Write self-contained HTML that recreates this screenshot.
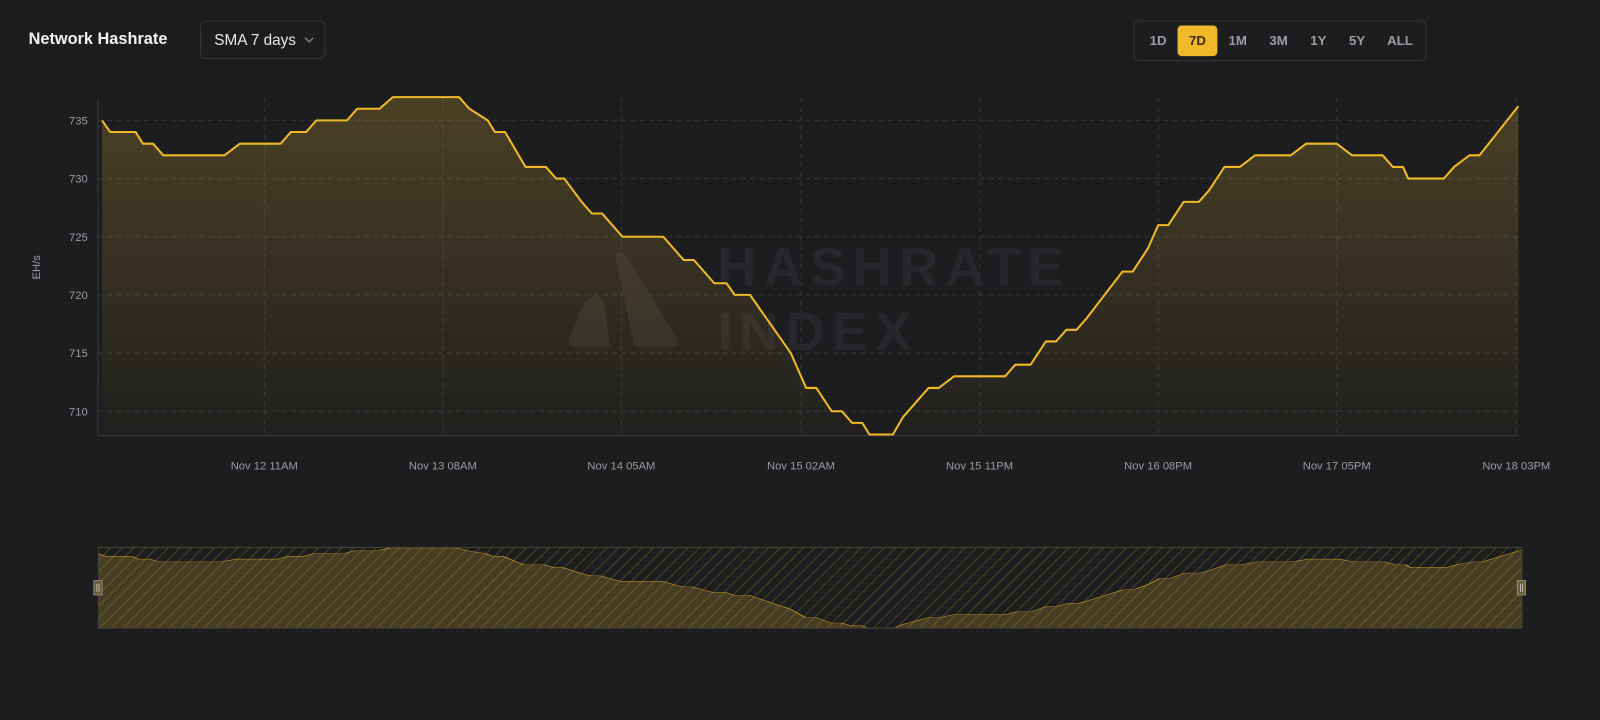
<!DOCTYPE html>
<html><head><meta charset="utf-8"><style>
body{margin:0;width:1600px;height:720px;background:#1c1d1f;font-family:"Liberation Sans",sans-serif;overflow:hidden;position:relative}
#w{position:absolute;left:0;top:0;width:1568px;height:706px;transform:scale(1.0204);transform-origin:0 0}
.t{position:absolute;left:28px;top:30px;color:#f2f2f2;font-weight:bold;font-size:16px}
.sel{position:absolute;left:196px;top:20px;width:123px;height:38px;border:1px solid #35363a;border-radius:6px;box-sizing:border-box;color:#e8e8e8;font-size:15px;line-height:38px;padding-left:13px}
.sel svg{position:absolute;left:101px;top:15px}
.rng{position:absolute;left:1111px;top:20px;width:287px;height:40px;border:1px solid #35363a;border-radius:6px;box-sizing:border-box}
.rng span{position:absolute;top:4px;height:30px;line-height:30px;font-size:13px;color:#9a9ca2;font-weight:bold;text-align:center}
.rng .on{background:#f0b929;color:#3a2e10;border-radius:4px}
</style></head><body><div id="w">
<div class="t">Network Hashrate</div>
<div class="sel">SMA 7 days<svg width="10" height="6" viewBox="0 0 10 6"><path d="M1 1l4 4 4-4" stroke="#888" stroke-width="1.3" fill="none"/></svg></div>
<div class="rng"><span style="left:10px;width:26px">1D</span><span class="on" style="left:42px;width:39px">7D</span><span style="left:86px;width:30px">1M</span><span style="left:126px;width:30px">3M</span><span style="left:166px;width:28px">1Y</span><span style="left:204px;width:28px">5Y</span><span style="left:244px;width:32px">ALL</span></div>
<svg width="1568" height="706" style="position:absolute;left:0;top:0" font-family="Liberation Sans,sans-serif">
<defs>
<linearGradient id="g" x1="0" y1="0" x2="0" y2="1"><stop offset="0" stop-color="#c9a035" stop-opacity=".27"/><stop offset="1" stop-color="#c9a035" stop-opacity=".03"/></linearGradient>
<pattern id="h" width="8" height="8" patternUnits="userSpaceOnUse" patternTransform="rotate(45)"><line x1="0" y1="0" x2="0" y2="8" stroke="#6b5a2a" stroke-width="1.2"/></pattern>
<path id="ln" d="M100,118 L108,129.4 L133,129.4 L140,140.8 L150,140.8 L160,152.2 L220,152.2 L235,140.8 L275,140.8 L285,129.4 L300,129.4 L310,118 L340,118 L350,106.6 L372,106.6 L385,95.2 L450,95.2 L460,106.6 L478,118 L485,129.4 L495,129.4 L515,163.6 L535,163.6 L545,175 L553,175 L570,197.8 L580,209.2 L590,209.2 L600,220.6 L610,232 L650,232 L660,243.4 L670,254.8 L680,254.8 L690,266.2 L700,277.6 L712,277.6 L720,289 L735,289 L775,346 L790,380.2 L800,380.2 L815,403 L825,403 L835,414.4 L845,414.4 L852,425.8 L875,425.8 L885,408.7 L900,391.6 L910,380.2 L920,380.2 L935,368.8 L985,368.8 L995,357.4 L1010,357.4 L1025,334.6 L1035,334.6 L1045,323.2 L1055,323.2 L1065,311.8 L1100,266.2 L1110,266.2 L1125,243.4 L1135,220.6 L1145,220.6 L1160,197.8 L1175,197.8 L1185,186.4 L1200,163.6 L1215,163.6 L1230,152.2 L1265,152.2 L1280,140.8 L1310,140.8 L1325,152.2 L1355,152.2 L1365,163.6 L1375,163.6 L1380,175 L1415,175 L1425,163.6 L1440,152.2 L1450,152.2 L1488,104"/>
</defs>
<g stroke="#34353a" stroke-dasharray="5,4" stroke-width="1">
<line x1="96" x2="1488" y1="118" y2="118"/><line x1="96" x2="1488" y1="175" y2="175"/><line x1="96" x2="1488" y1="232" y2="232"/><line x1="96" x2="1488" y1="289" y2="289"/><line x1="96" x2="1488" y1="346" y2="346"/><line x1="96" x2="1488" y1="403" y2="403"/>
<line x1="259" x2="259" y1="96" y2="427"/><line x1="434" x2="434" y1="96" y2="427"/><line x1="609" x2="609" y1="96" y2="427"/><line x1="785" x2="785" y1="96" y2="427"/><line x1="960" x2="960" y1="96" y2="427"/><line x1="1135" x2="1135" y1="96" y2="427"/><line x1="1310" x2="1310" y1="96" y2="427"/><line x1="1486" x2="1486" y1="96" y2="427"/>
</g>
<line x1="96" x2="96" y1="96" y2="427" stroke="#3a3b40"/><line x1="96" x2="1488" y1="427" y2="427" stroke="#3a3b40"/>
<g fill="#26272a" font-weight="bold" font-size="53" letter-spacing="7"><text x="703" y="280">HASHRATE</text><text x="703" y="343">INDEX</text></g>
<path d="M573,296 L558,332 Q556,340 565,340 L598,340 L592,298 Q590,290 583,290Z M603,252 Q605,242 613,250 L663,330 Q668,340 657,340 L622,340 Z" fill="#29292a"/>
<path d="M100,427 L100,118 L108,129.4 L133,129.4 L140,140.8 L150,140.8 L160,152.2 L220,152.2 L235,140.8 L275,140.8 L285,129.4 L300,129.4 L310,118 L340,118 L350,106.6 L372,106.6 L385,95.2 L450,95.2 L460,106.6 L478,118 L485,129.4 L495,129.4 L515,163.6 L535,163.6 L545,175 L553,175 L570,197.8 L580,209.2 L590,209.2 L600,220.6 L610,232 L650,232 L660,243.4 L670,254.8 L680,254.8 L690,266.2 L700,277.6 L712,277.6 L720,289 L735,289 L775,346 L790,380.2 L800,380.2 L815,403 L825,403 L835,414.4 L845,414.4 L852,425.8 L875,425.8 L885,408.7 L900,391.6 L910,380.2 L920,380.2 L935,368.8 L985,368.8 L995,357.4 L1010,357.4 L1025,334.6 L1035,334.6 L1045,323.2 L1055,323.2 L1065,311.8 L1100,266.2 L1110,266.2 L1125,243.4 L1135,220.6 L1145,220.6 L1160,197.8 L1175,197.8 L1185,186.4 L1200,163.6 L1215,163.6 L1230,152.2 L1265,152.2 L1280,140.8 L1310,140.8 L1325,152.2 L1355,152.2 L1365,163.6 L1375,163.6 L1380,175 L1415,175 L1425,163.6 L1440,152.2 L1450,152.2 L1488,104 L1488,427Z" fill="url(#g)"/>
<use href="#ln" fill="none" stroke="#f0b929" stroke-width="2" stroke-linejoin="round"/>
<g fill="#9a9ca2" font-size="11" text-anchor="end"><text x="86" y="122">735</text><text x="86" y="179">730</text><text x="86" y="236">725</text><text x="86" y="293">720</text><text x="86" y="350">715</text><text x="86" y="407">710</text></g>
<text x="39" y="262" fill="#9a9ca2" font-size="11" transform="rotate(-90 39 262)" text-anchor="middle">EH/s</text>
<g fill="#9a9ca2" font-size="11" text-anchor="middle"><text x="259" y="460">Nov 12 11AM</text><text x="434" y="460">Nov 13 08AM</text><text x="609" y="460">Nov 14 05AM</text><text x="785" y="460">Nov 15 02AM</text><text x="960" y="460">Nov 15 11PM</text><text x="1135" y="460">Nov 16 08PM</text><text x="1310" y="460">Nov 17 05PM</text><text x="1486" y="460">Nov 18 03PM</text></g>
<clipPath id="nc"><rect x="96" y="536" width="1395" height="79"/></clipPath>
<g clip-path="url(#nc)">
<rect x="96" y="536" width="1395" height="79" fill="url(#h)"/>
<g transform="matrix(1.005 0 0 0.239 -4.5 514.25)"><path d="M100,500 L100,118 L108,129.4 L133,129.4 L140,140.8 L150,140.8 L160,152.2 L220,152.2 L235,140.8 L275,140.8 L285,129.4 L300,129.4 L310,118 L340,118 L350,106.6 L372,106.6 L385,95.2 L450,95.2 L460,106.6 L478,118 L485,129.4 L495,129.4 L515,163.6 L535,163.6 L545,175 L553,175 L570,197.8 L580,209.2 L590,209.2 L600,220.6 L610,232 L650,232 L660,243.4 L670,254.8 L680,254.8 L690,266.2 L700,277.6 L712,277.6 L720,289 L735,289 L775,346 L790,380.2 L800,380.2 L815,403 L825,403 L835,414.4 L845,414.4 L852,425.8 L875,425.8 L885,408.7 L900,391.6 L910,380.2 L920,380.2 L935,368.8 L985,368.8 L995,357.4 L1010,357.4 L1025,334.6 L1035,334.6 L1045,323.2 L1055,323.2 L1065,311.8 L1100,266.2 L1110,266.2 L1125,243.4 L1135,220.6 L1145,220.6 L1160,197.8 L1175,197.8 L1185,186.4 L1200,163.6 L1215,163.6 L1230,152.2 L1265,152.2 L1280,140.8 L1310,140.8 L1325,152.2 L1355,152.2 L1365,163.6 L1375,163.6 L1380,175 L1415,175 L1425,163.6 L1440,152.2 L1450,152.2 L1488,104 L1500,104 L1500,500Z" fill="#c9a035" fill-opacity=".25"/>
<use href="#ln" fill="none" stroke="#f0b929" stroke-width="1.2" vector-effect="non-scaling-stroke"/></g>
</g>
<rect x="96.5" y="536.5" width="1395" height="79" fill="none" stroke="#4a4230"/>
<rect x="92" y="569" width="8" height="14" fill="#6b5d35" stroke="#8a8a80"/><line x1="95" x2="95" y1="572" y2="580" stroke="#ccc" stroke-width=".8"/><line x1="97" x2="97" y1="572" y2="580" stroke="#ccc" stroke-width=".8"/>
<rect x="1487" y="569" width="8" height="14" fill="#6b5d35" stroke="#8a8a80"/><line x1="1490" x2="1490" y1="572" y2="580" stroke="#ccc" stroke-width=".8"/><line x1="1492" x2="1492" y1="572" y2="580" stroke="#ccc" stroke-width=".8"/>
</svg>
</div></body></html>
